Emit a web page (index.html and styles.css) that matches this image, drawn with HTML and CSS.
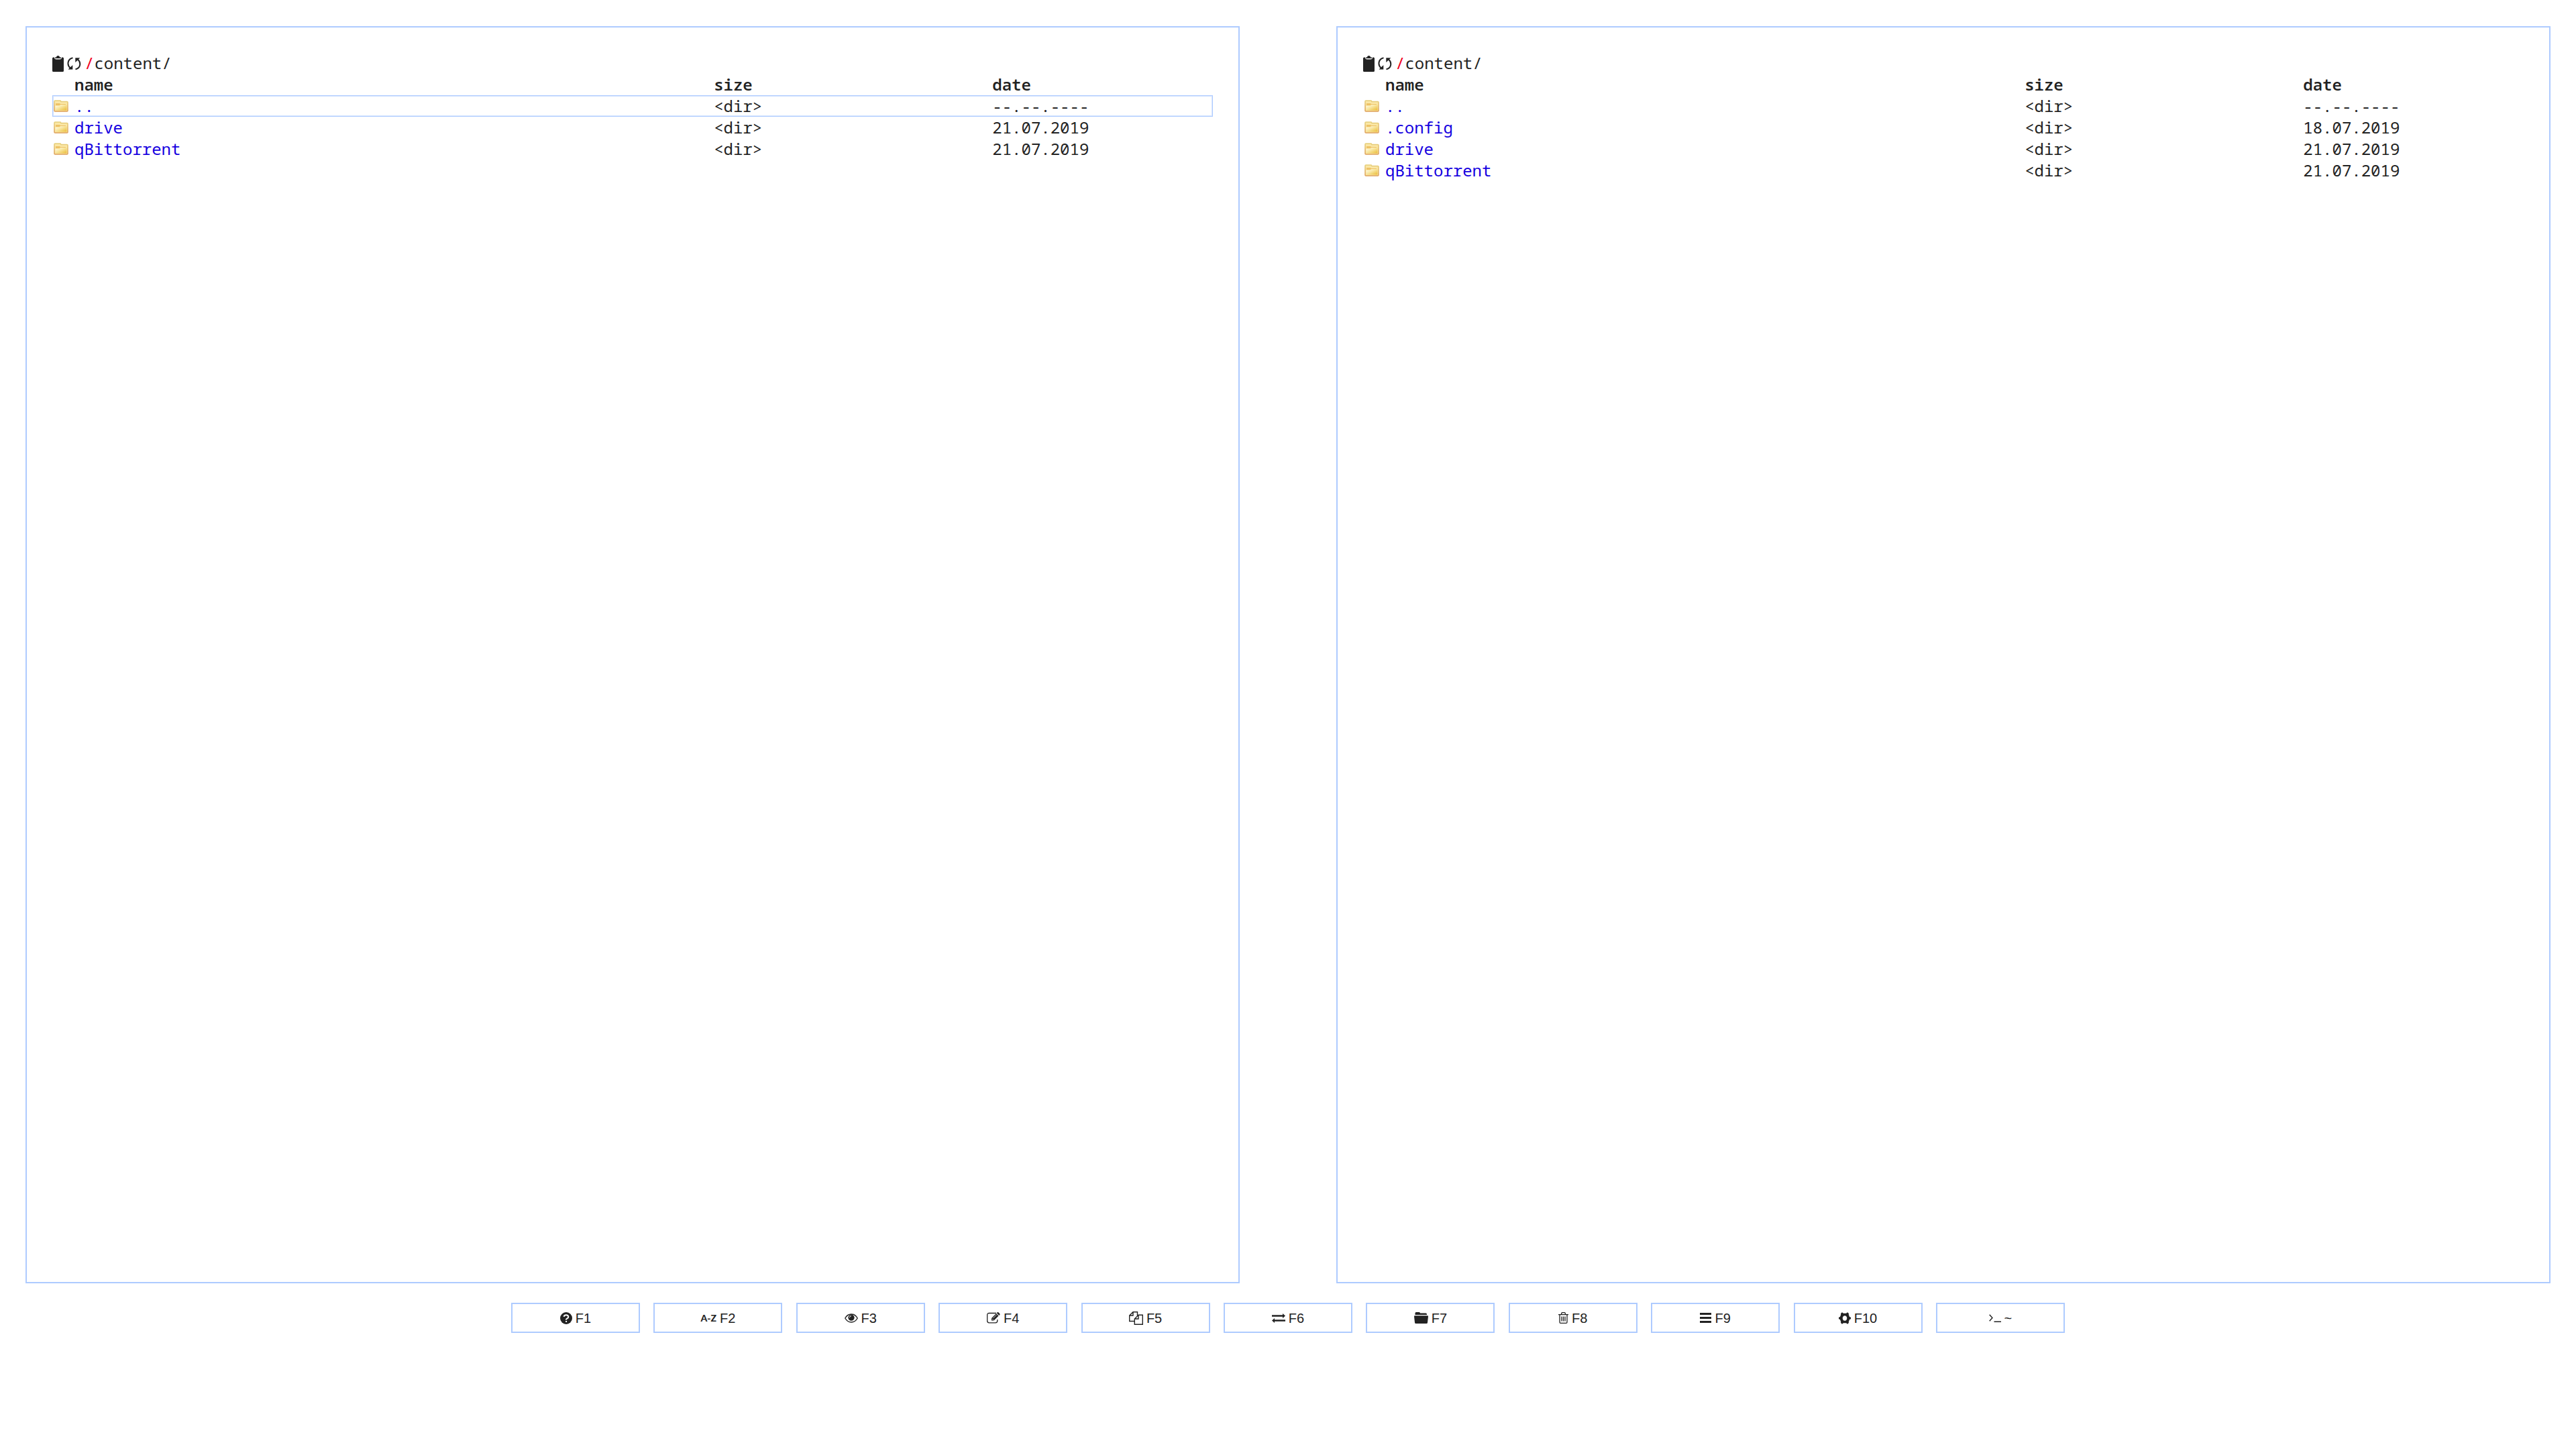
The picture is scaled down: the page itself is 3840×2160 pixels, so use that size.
FILE: index.html
```html
<!DOCTYPE html>
<html lang="en">
<head>
<meta charset="utf-8">
<title>/content/</title>
<link rel="stylesheet" href="styles.css">
</head>
<body>
<svg class="sprite" aria-hidden="true">
  <defs>
    <linearGradient id="folder-fill" x1="0" y1="0" x2="1" y2="1">
      <stop offset="0" stop-color="#fffdf2"/><stop offset=".45" stop-color="#f8e6a0"/><stop offset="1" stop-color="#eabb35"/>
    </linearGradient>
    <linearGradient id="folder-edge" x1="0" y1="0" x2="0" y2="1">
      <stop offset="0" stop-color="#e6cf7a"/><stop offset="1" stop-color="#dd9f58"/>
    </linearGradient>
    <symbol id="folder" viewBox="0 0 22 18">
      <path d="M1 16V2q0-1 1-1h8l1 1.500h9q1 0 1 1V16q0 1-1 1H2q-1 0-1-1z" fill="#fae7a6" stroke="url(#folder-edge)" stroke-width="1.500"/>
      <path d="M3 5h6l1 1h8v1H10L8.500 8H3z" fill="#e9b552" opacity=".75"/>
      <path d="M2.500 9H9l2-2h8.500v8.500h-17z" fill="url(#folder-fill)"/>
    </symbol>
    <symbol id="clipboard" viewBox="0 0 17 24">
      <path d="M1.500 2.500H3q0 3 3 3h5q3 0 3-3h1.500q1.500 0 1.500 1.500v18.500q0 1.500-1.500 1.500h-14Q0 24 0 22.500V4q0-1.500 1.500-1.500z"/>
      <path d="M4 4V2.500h2Q6 0 8.500 0T11 2.500h2V4z"/>
    </symbol>
    <symbol id="refresh" viewBox="0 0 21 20">
      <path d="M8.500 1.200C.5 2.800-.5 12 4.800 16.500M12.500 18.300C20.500 16.500 21 8 16 3.500" fill="none" stroke="currentColor" stroke-width="2"/>
      <path d="M1.500 18.500h6.800V12zM19.300 1.200h-7V8z"/>
    </symbol>
    <symbol id="help" viewBox="0 0 18 18">
      <circle cx="9" cy="9" r="9"/>
      <path d="M5.500 6.800Q6 4.200 9 4.200t3.300 2.700Q12.300 8.500 10.500 9.300T9.100 11.500M9.100 13v2" fill="none" stroke="#fff" stroke-width="2"/>
    </symbol>
    <symbol id="eye" viewBox="0 0 20 14">
      <path d="M.8 7Q4.200 1 10 1t9.200 6Q15.800 13 10 13T.8 7z" fill="none" stroke="currentColor" stroke-width="1.400"/>
      <circle cx="10" cy="6.200" r="4.600"/>
      <path d="M7.400 6.200Q7.400 3.600 10 3.600" fill="none" stroke="#fff"/>
    </symbol>
    <symbol id="edit" viewBox="0 0 20 17">
      <path d="M14 1.500H3.500Q.7 1.500.7 4v9q0 2.800 2.800 2.800H13q2.800 0 2.800-2.800v-2" fill="none" stroke="currentColor" stroke-width="1.300"/>
      <path d="M7 12.500V9L14 2l3.500 3.500-7 7zM14.700 1.300l1-1q.8-.6 1.600 0l2 2q.6.800 0 1.600l-1 1z"/>
      <path d="M8 9.800l2 2M9.500 9l5-5" stroke="#fff" stroke-width=".8"/>
    </symbol>
    <symbol id="copy" viewBox="0 0 21 20">
      <path d="M8 14.500H.7V6L6 .7h6.500V6M6 .7V6H.7M8.300 11v8.300h12V5.300H14zM14 5.300V11H8.300" fill="none" stroke="currentColor" stroke-width="1.400"/>
    </symbol>
    <symbol id="exchange" viewBox="0 0 20 14">
      <path d="M0 2.200h16V0l4 3.500L16 7V4.800H0zM20 9.200H4V7l-4 3.500L4 14v-2.200h16z"/>
    </symbol>
    <symbol id="directory" viewBox="0 0 21 17">
      <path d="M1.500 4V1.500Q1.500 0 3 0h4.500Q9 0 9 1.500h8.500Q19 1.500 19 3v1zM1 5.200h19q1 0 1 1l-1 9.300q-.2 1.500-1.500 1.500h-16Q1.200 17 1 15.500L0 6.200q0-1 1-1z"/>
    </symbol>
    <symbol id="trash" viewBox="0 0 15 17">
      <path d="M0 3.600h15M4.500 3.500Q4.500.7 6 .7h3q1.500 0 1.500 2.800M2 3.600V15q0 1.300 1.300 1.300h8.400Q13 16.300 13 15V3.600M5 6.500v7M7.500 6.500v7M10 6.500v7" fill="none" stroke="currentColor" stroke-width="1.300"/>
    </symbol>
    <symbol id="menu" viewBox="0 0 17 15">
      <path d="M0 0h17v3H0zM0 6h17v3H0zM0 12h17v3H0z"/>
    </symbol>
    <symbol id="gear" viewBox="0 0 18 18">
      <path fill-rule="evenodd" d="M4.500.5Q6 .3 6.700 1.700h4.600Q12 .3 13.500.5L15 2.300q-.6 1.600.4 3L16 7l2 .8v2.400l-2 .8-.6 1.700q-1 1.400-.4 3l-1.500 1.800q-1.500.2-2.200-1.200H6.700Q6 17.700 4.500 17.500L3 15.700q.6-1.600-.4-3L2 11l-2-.8V7.800L2 7l.6-1.700q1-1.400.4-3zM9 5.200a3.300 3.800 0 1 0 .01 0z"/>
    </symbol>
    <symbol id="terminal" viewBox="0 0 18 12">
      <path d="M.7.7L5 5.500.7 10.300M7.500 11.200H18" fill="none" stroke="currentColor" stroke-width="1.400"/>
    </symbol>
  </defs>
</svg>

<main class="panels">
  <section class="panel" aria-label="Left panel">
    <nav class="path">
      <button class="tool" type="button" aria-label="Copy path"><svg class="clipboard"><use href="#clipboard"/></svg></button>
      <button class="tool" type="button" aria-label="Refresh"><svg class="refresh"><use href="#refresh"/></svg></button>
      <span class="links"><a class="root" href="#">/</a><a href="#">content</a>/</span>
    </nav>
    <table class="files">
      <thead>
        <tr><th class="icon-cell"></th><th>name</th><th class="size">size</th><th class="date">date</th></tr>
      </thead>
      <tbody>
        <tr class="current"><td><svg class="folder"><use href="#folder"/></svg></td><td><a href="#">..</a></td><td>&lt;dir&gt;</td><td>--.--.----</td></tr>
        <tr><td><svg class="folder"><use href="#folder"/></svg></td><td><a href="#">drive</a></td><td>&lt;dir&gt;</td><td>21.07.2019</td></tr>
        <tr><td><svg class="folder"><use href="#folder"/></svg></td><td><a href="#">qBittorrent</a></td><td>&lt;dir&gt;</td><td>21.07.2019</td></tr>
      </tbody>
    </table>
  </section>
  <section class="panel" aria-label="Right panel">
    <nav class="path">
      <button class="tool" type="button" aria-label="Copy path"><svg class="clipboard"><use href="#clipboard"/></svg></button>
      <button class="tool" type="button" aria-label="Refresh"><svg class="refresh"><use href="#refresh"/></svg></button>
      <span class="links"><a class="root" href="#">/</a><a href="#">content</a>/</span>
    </nav>
    <table class="files">
      <thead>
        <tr><th class="icon-cell"></th><th>name</th><th class="size">size</th><th class="date">date</th></tr>
      </thead>
      <tbody>
        <tr><td><svg class="folder"><use href="#folder"/></svg></td><td><a href="#">..</a></td><td>&lt;dir&gt;</td><td>--.--.----</td></tr>
        <tr><td><svg class="folder"><use href="#folder"/></svg></td><td><a href="#">.config</a></td><td>&lt;dir&gt;</td><td>18.07.2019</td></tr>
        <tr><td><svg class="folder"><use href="#folder"/></svg></td><td><a href="#">drive</a></td><td>&lt;dir&gt;</td><td>21.07.2019</td></tr>
        <tr><td><svg class="folder"><use href="#folder"/></svg></td><td><a href="#">qBittorrent</a></td><td>&lt;dir&gt;</td><td>21.07.2019</td></tr>
      </tbody>
    </table>
  </section>
</main>

<footer class="keys">
  <button type="button"><svg width="18" height="18"><use href="#help"/></svg>F1</button>
  <button type="button"><span class="sort">A-Z</span>F2</button>
  <button type="button"><svg width="20" height="14"><use href="#eye"/></svg>F3</button>
  <button type="button"><svg width="20" height="17"><use href="#edit"/></svg>F4</button>
  <button type="button"><svg width="21" height="20"><use href="#copy"/></svg>F5</button>
  <button type="button"><svg width="20" height="14"><use href="#exchange"/></svg>F6</button>
  <button type="button"><svg width="21" height="17"><use href="#directory"/></svg>F7</button>
  <button type="button"><svg width="15" height="17"><use href="#trash"/></svg>F8</button>
  <button type="button"><svg width="17" height="15"><use href="#menu"/></svg>F9</button>
  <button type="button"><svg width="18" height="18"><use href="#gear"/></svg>F10</button>
  <button type="button"><svg width="18" height="12"><use href="#terminal"/></svg>~</button>
</footer>
</body>
</html>
```
FILE: styles.css
```css
* {
  box-sizing: border-box;
}

body {
  display: flex;
  flex-direction: column;
  gap: 29px;
  min-height: 100vh;
  margin: 0;
  padding: 39px 38px 8vh;
  background: #fff;
  color: #222;
  font: 24px/32px "Droid Sans Mono", "Noto Sans Mono", "DejaVu Sans Mono", monospace;
}

.sprite {
  position: absolute;
  width: 0;
  height: 0;
}

svg {
  display: block;
  fill: currentColor;
}

a {
  color: #1500e0;
  text-decoration: none;
}

button {
  margin: 0;
  padding: 0;
  border: 0;
  background: none;
  color: inherit;
  font: inherit;
  cursor: pointer;
}

.panels {
  display: grid;
  flex: 1;
  grid-template-columns: 1fr 1fr;
  gap: 144px;
}

.panel {
  padding: 38px;
  border: 2px solid #aecbff;
}

.path {
  display: flex;
  align-items: center;
  height: 31px;
}

.path a {
  color: inherit;
}

.links {
  align-self: flex-start;
  line-height: 30px;
}

.path .root {
  color: #f00020;
}

.clipboard {
  width: 17px;
  height: 24px;
}

.refresh {
  width: 21px;
  height: 20px;
  margin: 0 5px;
}

.files {
  width: 100%;
  border-collapse: collapse;
  table-layout: fixed;
}

.files th,
.files td {
  height: 32px;
  padding: 0;
  text-align: left;
  white-space: nowrap;
}

.files th {
  font-weight: 600;
}

.files .icon-cell {
  width: 33px;
}

.files .size {
  width: 24%;
}

.files .date {
  width: 19%;
}

.files .current {
  outline: 1px solid #aecbff;
  outline-offset: -1px;
  box-shadow: inset 0 0 0 2px #d6e5ff;
}

.folder {
  width: 22px;
  height: 18px;
  margin-left: 2px;
}

.keys {
  display: flex;
  justify-content: space-between;
  width: 2316px;
  max-width: 100%;
  margin: 0 auto;
  font-family: "Liberation Sans", Arial, sans-serif;
  font-size: 20px;
}

.keys button {
  display: flex;
  align-items: center;
  justify-content: center;
  gap: 5px;
  width: 192px;
  height: 45px;
  border: 2px solid #aecbff;
}

.sort {
  font-family: Lato, "Liberation Sans", sans-serif;
  font-size: 14px;
  font-weight: 900;
}
```
